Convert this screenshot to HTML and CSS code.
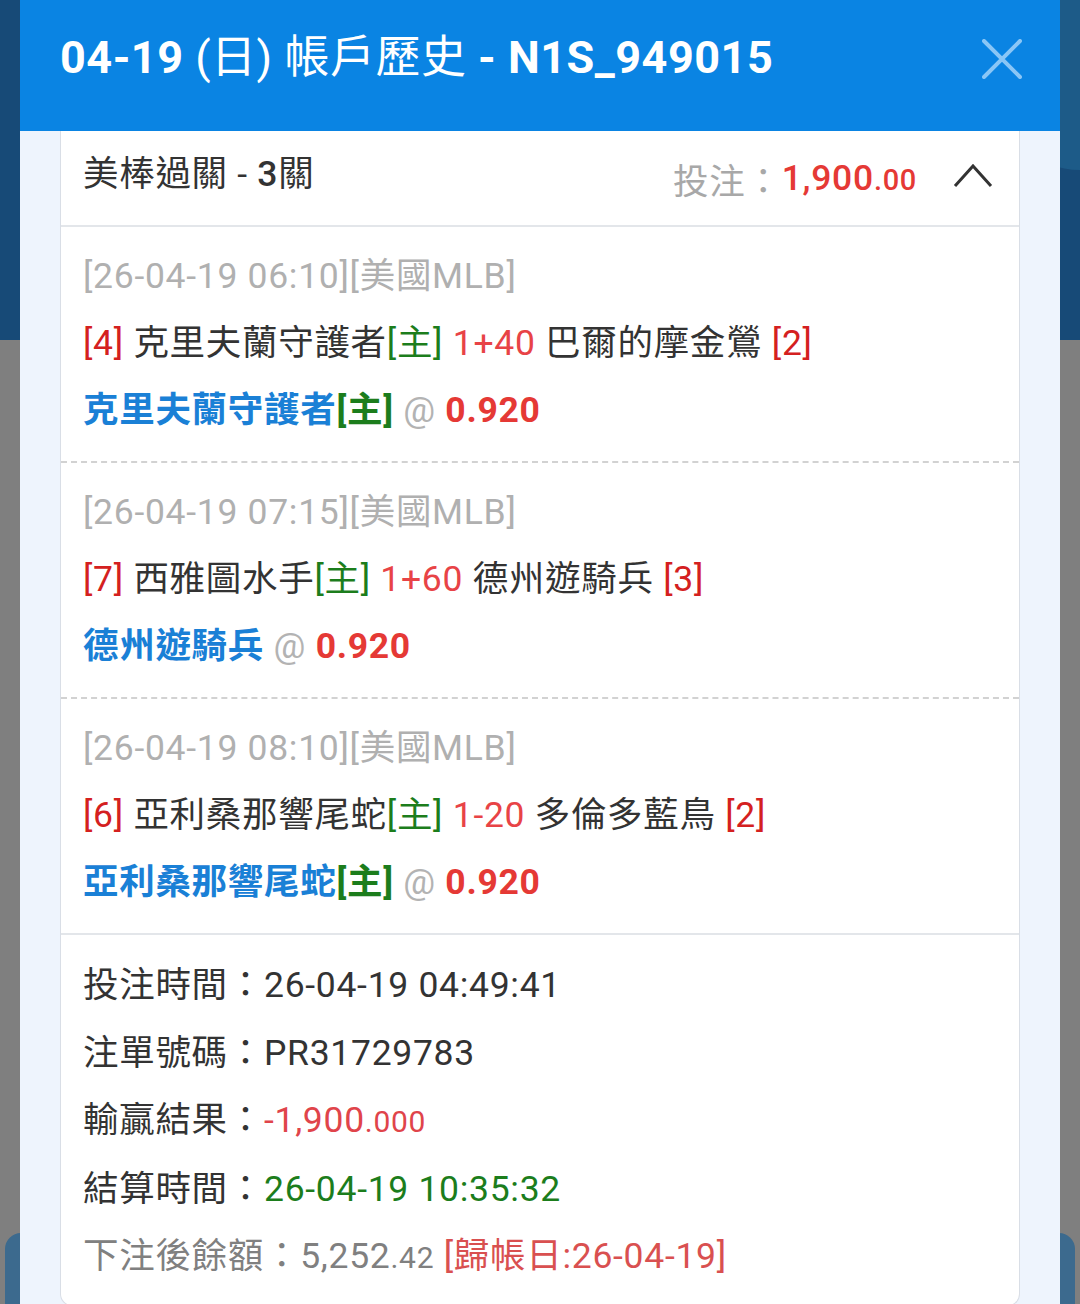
FILE: index.html
```html
<!doctype html>
<html lang="zh-Hant">

<head>
  <meta charset="utf-8">
  <meta name="viewport" content="width=device-width, initial-scale=1">
  <title>帳戶歷史</title>
  <link rel="stylesheet" href="styles.css">
</head>

<body>
  <div class="page">
    <div class="page-banner"></div>
    <div class="page-bubble"></div>
    <div class="page-bar"></div>
  </div>

  <div class="modal">
    <div class="modal-head">
      <h1 class="modal-title"><b>04-19</b> (日) 帳戶歷史 <b>- N1S_949015</b></h1>
      <svg class="close" width="40" height="40" viewBox="0 0 40 40">
        <path d="M2 2 L38 38 M38 2 L2 38" stroke="#8ac6f6" stroke-width="4" stroke-linecap="round" fill="none" />
      </svg>
    </div>

    <div class="modal-body">
      <div class="card">
        <div class="card-head">
          <div class="card-title">美棒過關 - <b>3</b>關</div>
          <div class="card-stake">
            <span class="muted">投注：</span><span class="stake">1,900<small>.00</small></span>
            <svg class="chevron" width="40" height="26" viewBox="0 0 40 26">
              <path d="M2 23 L20 3 L38 23" stroke="#333" stroke-width="3" fill="none" />
            </svg>
          </div>
        </div>

        <div class="leg">
          <div class="leg-time">[26-04-19 06:10][美國MLB]</div>
          <div><span class="dark-red">[4]</span> 克里夫蘭守護者<span class="green">[主]</span> <span class="red">1+40</span> 巴爾的摩金鶯 <span class="dark-red">[2]</span></div>
          <div class="pick">克里夫蘭守護者<span class="green">[主]</span> <span class="at">@</span> <span class="odds">0.920</span></div>
        </div>

        <div class="leg">
          <div class="leg-time">[26-04-19 07:15][美國MLB]</div>
          <div><span class="dark-red">[7]</span> 西雅圖水手<span class="green">[主]</span> <span class="red">1+60</span> 德州遊騎兵 <span class="dark-red">[3]</span></div>
          <div class="pick">德州遊騎兵 <span class="at">@</span> <span class="odds">0.920</span></div>
        </div>

        <div class="leg leg-last">
          <div class="leg-time">[26-04-19 08:10][美國MLB]</div>
          <div><span class="dark-red">[6]</span> 亞利桑那響尾蛇<span class="green">[主]</span> <span class="red">1-20</span> 多倫多藍鳥 <span class="dark-red">[2]</span></div>
          <div class="pick">亞利桑那響尾蛇<span class="green">[主]</span> <span class="at">@</span> <span class="odds">0.920</span></div>
        </div>

        <div class="summary">
          <div>投注時間：26-04-19 04:49:41</div>
          <div>注單號碼：PR31729783</div>
          <div>輸贏結果：<span class="loss">-1,900<small>.000</small></span></div>
          <div>結算時間：<span class="settled">26-04-19 10:35:32</span></div>
          <div class="balance">下注後餘額：5,252<small>.42</small> <span class="ledger">[歸帳日:26-04-19]</span></div>
        </div>
      </div>
    </div>
  </div>
</body>
</html>
```

FILE: styles.css
```css
body {
  margin: 0;
  width: 1080px;
  height: 1304px;
  overflow: hidden;
  background-color: #7f7f7f;
  font-family: Roboto, "Noto Sans CJK TC", sans-serif;
  color: #333;
}
.page {
  position: relative;
  height: 1304px;
  overflow: hidden;
}
.page-banner {
  height: 340px;
  background-color: #174a77;
}
.page-bubble {
  position: absolute;
  left: 1000px;
  top: -120px;
  width: 160px;
  height: 290px;
  border-radius: 80px;
  background-color: #1d5b88;
}
.page-bar {
  position: absolute;
  left: 5px;
  right: 5px;
  top: 1233px;
  height: 120px;
  border-radius: 16px;
  background-color: #3c6a8e;
}
.modal {
  position: absolute;
  left: 20px;
  top: 0;
  width: 1040px;
  height: 1304px;
  background-color: #eef4fd;
}
.modal-head {
  height: 131px;
  box-sizing: border-box;
  padding: 0 38px 0 40px;
  display: flex;
  align-items: center;
  justify-content: space-between;
  background-color: #0a84e3;
}
.modal-title {
  margin: 0 0 24px;
  color: #fff;
  font-size: 45px;
  font-weight: 400;
  letter-spacing: 0.5px;
  white-space: nowrap;
}
.modal-title b {
  font-weight: 700;
}
.close {
  margin-bottom: 14px;
}
.modal-body {
  padding: 0 40px;
}
.card {
  background-color: #fff;
  border: 1px solid #d9dee6;
  border-top: none;
  border-radius: 0 0 12px 12px;
  font-size: 35.5px;
  letter-spacing: 0.7px;
}
.card-head {
  height: 96px;
  box-sizing: border-box;
  padding: 0 26px 0 22px;
  display: flex;
  align-items: center;
  justify-content: space-between;
  border-bottom: 2px solid #e3e6ea;
}
.card-title {
  margin-bottom: 16px;
}
.card-title b {
  font-weight: 500;
}
.card-stake {
  display: flex;
  align-items: center;
}
.muted {
  color: #a8a8a8;
}
.stake {
  color: #e53935;
  font-weight: 500;
  margin-right: 36px;
}
.stake small {
  font-size: 29px;
}
.chevron {
  margin-bottom: 4px;
}
.leg {
  padding: 16px 22px 17px;
  line-height: 67px;
  border-bottom: 2px dashed #d2d2d2;
  white-space: nowrap;
}
.leg-last {
  border-bottom: 2px solid #e3e6ea;
}
.leg-time {
  color: #b0b0b0;
}
.dark-red {
  color: #d42020;
}
.red {
  color: #e84346;
}
.green {
  color: #1c7d1c;
}
.pick {
  color: #1a80d6;
  font-weight: 700;
}
.at {
  color: #b3b3b3;
  font-weight: 400;
}
.odds {
  color: #e53935;
}
.summary {
  padding: 17px 22px 13px;
  line-height: 67.5px;
  white-space: nowrap;
}
.loss {
  color: #e0444a;
}
.loss small,
.balance small {
  font-size: 30px;
}
.settled {
  color: #1c7d1c;
}
.balance {
  color: #808080;
}
.ledger {
  color: #d95050;
}
```
